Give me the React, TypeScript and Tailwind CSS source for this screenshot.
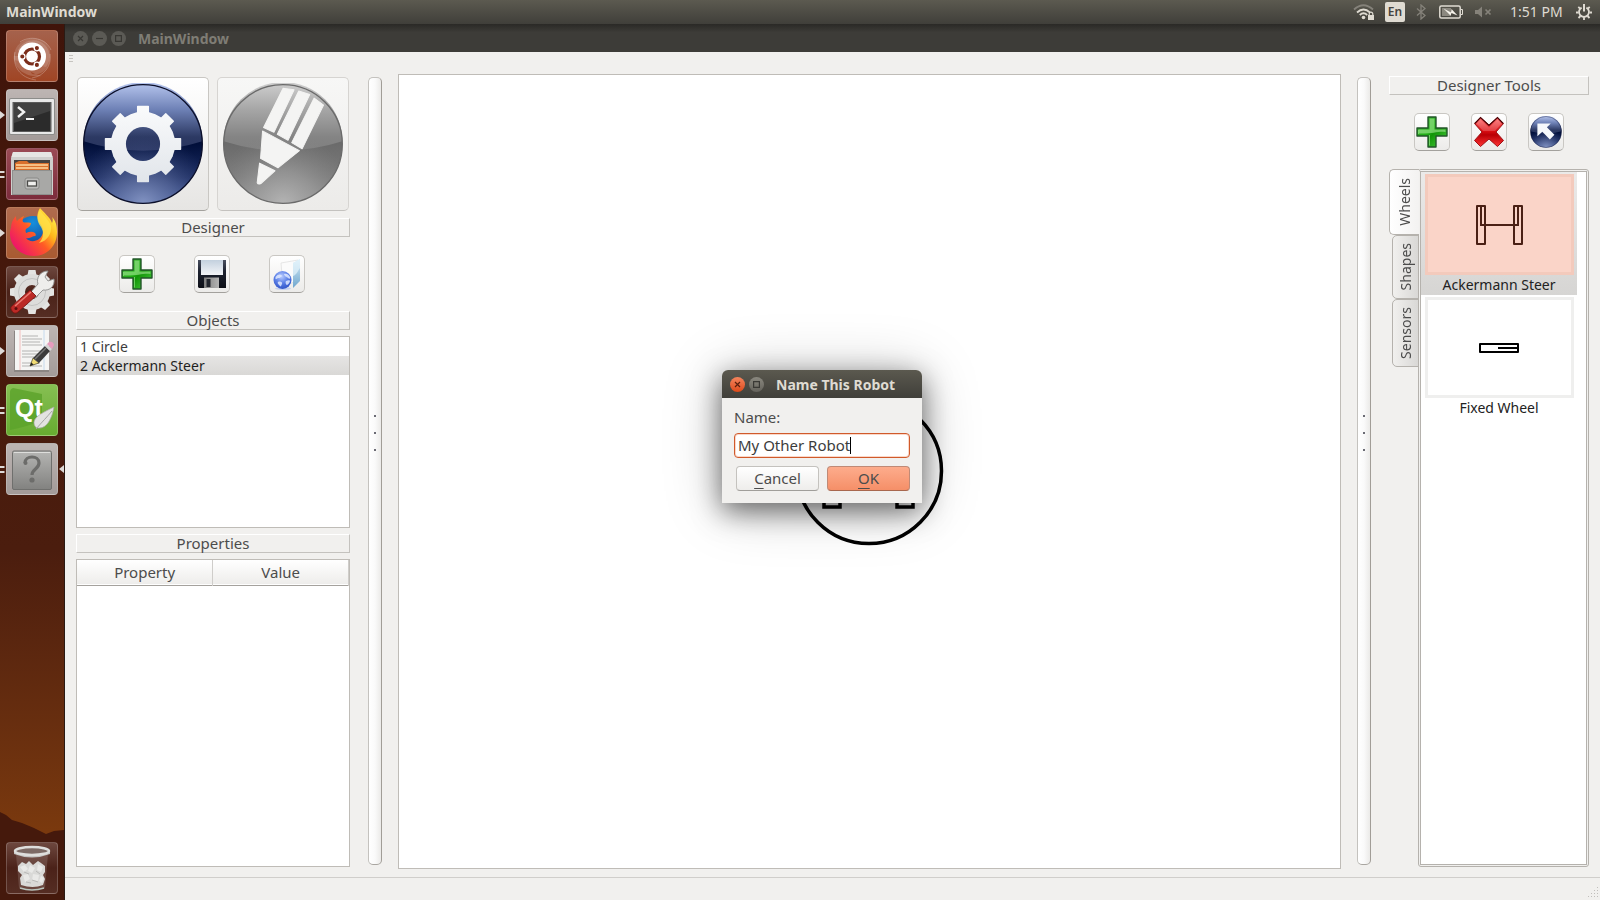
import { useState, type ReactNode } from "react";
import clsx from "clsx";

/* ---------- shared pieces ---------- */

function PanelLabel({ children }: { children: ReactNode }) {
  return (
    <h2 className="flex h-[19px] items-center justify-center border border-t-white border-l-white border-r-[#c4c2be] border-b-[#c4c2be] text-[15px] leading-none font-normal text-[#4c4c4c]">
      {children}
    </h2>
  );
}

function ToolButton({ label, children }: { label: string; children: ReactNode }) {
  return (
    <button
      type="button"
      aria-label={label}
      className="flex h-[38px] w-9 items-center justify-center rounded-[5px] border border-[#c9c7c3] border-b-[#a3a19d] bg-linear-to-b from-white to-[#ecebe9]"
    >
      {children}
    </button>
  );
}

function Splitter({ label }: { label: string }) {
  return (
    <div
      role="separator"
      aria-label={label}
      aria-orientation="vertical"
      className="mt-[3px] mb-1 flex w-[14px] shrink-0 flex-col items-center justify-center gap-[15px] rounded-[5px] border border-[#c4c2be] border-r-[#a19d97] border-b-[#a9a6a1] bg-linear-to-r from-white via-[#fafafa] to-[#ebeae8] pb-[76px]"
    >
      <span className="h-[2px] w-[2px] bg-[#6b6b74]" />
      <span className="h-[2px] w-[2px] bg-[#6b6b74]" />
      <span className="h-[2px] w-[2px] bg-[#6b6b74]" />
    </div>
  );
}

/* ---------- tool icons ---------- */

function PlusIcon() {
  return (
    <svg width="32" height="32" viewBox="0 0 32 32" aria-hidden="true">
      <defs>
        <linearGradient id="plusFill" x1="0" y1="0" x2="1" y2="1">
          <stop offset="0" stopColor="#3fae35" />
          <stop offset="0.45" stopColor="#1fae14" />
          <stop offset="0.55" stopColor="#129407" />
          <stop offset="1" stopColor="#4ed344" />
        </linearGradient>
      </defs>
      <path d="M12 1h8v11h11v8H20v11h-8V20H1v-8h11z" fill="url(#plusFill)" stroke="#23552a" strokeWidth="1.4" strokeLinejoin="round" />
      <path d="M13.5 2.5h5v11h11v2.5C22 15 17 18 2.500 17.500v-4h11z" fill="#b4f0a6" opacity="0.55" />
      <path d="M13.500 29.500V19M2.500 14v4" stroke="#8be47f" strokeWidth="1" opacity="0.7" />
    </svg>
  );
}

function FloppyIcon() {
  return (
    <svg width="30" height="30" viewBox="0 0 30 30" aria-hidden="true">
      <defs>
        <linearGradient id="diskBody" x1="0" y1="0" x2="0" y2="1">
          <stop offset="0" stopColor="#4a5060" />
          <stop offset="0.4" stopColor="#1d2230" />
          <stop offset="1" stopColor="#0d0f16" />
        </linearGradient>
        <linearGradient id="diskLabel" x1="0" y1="0" x2="0" y2="1">
          <stop offset="0" stopColor="#c3d0de" />
          <stop offset="1" stopColor="#f3f5f8" />
        </linearGradient>
        <linearGradient id="diskShutter" x1="0" y1="0" x2="1" y2="0">
          <stop offset="0" stopColor="#7f7f7f" />
          <stop offset="1" stopColor="#b4b4b4" />
        </linearGradient>
      </defs>
      <path d="M1 1h28v28H2l-1-1z" fill="url(#diskBody)" />
      <path d="M4 1h22v15H4z" fill="url(#diskLabel)" />
      <path d="M7 18.500h15V29H7z" fill="url(#diskShutter)" />
      <path d="M9.500 20h4v8h-4z" fill="#22252d" />
    </svg>
  );
}

function FolderGlobeIcon() {
  return (
    <svg width="32" height="34" viewBox="0 0 32 34" aria-hidden="true">
      <defs>
        <linearGradient id="folderSide" x1="0" y1="0" x2="0" y2="1">
          <stop offset="0" stopColor="#d8edf8" />
          <stop offset="1" stopColor="#6fa6cd" />
        </linearGradient>
        <radialGradient id="globe" cx="0.45" cy="0.3" r="0.75">
          <stop offset="0" stopColor="#b9ccff" />
          <stop offset="0.5" stopColor="#5b7fe6" />
          <stop offset="1" stopColor="#2b4fc4" />
        </radialGradient>
      </defs>
      <path d="M10 6l17-3v20L12 30z" fill="#fbfbfb" stroke="#dcdcdc" strokeWidth="0.700" />
      <path d="M22 6l7-4v22l-7 7z" fill="url(#folderSide)" />
      <path d="M22 6l7-4v9c-2 2-3 7-7 8z" fill="#e4f4fb" opacity="0.7" />
      <ellipse cx="12" cy="31.500" rx="8" ry="1.500" fill="#a9bdf2" opacity="0.6" />
      <circle cx="11.500" cy="23" r="9" fill="url(#globe)" />
      <path d="M4.500 20c2-3 5-3 6-2s-1 3-3 3-2 2-3 1zM13 17c3-1 5 1 6 3s-1 2-2 1-4-2-4-4zM7 25c2-1 5 0 4 2s-1 3-2 2-3-3-2-4zM15 24c2-1 4-1 4 0s-2 4-3 4-2-3-1-4z" fill="#dfe9ff" opacity="0.85" />
    </svg>
  );
}

function CrossIcon() {
  return (
    <svg width="32" height="32" viewBox="0 0 32 32" aria-hidden="true">
      <defs>
        <linearGradient id="crossFill" x1="0" y1="0" x2="0" y2="1">
          <stop offset="0" stopColor="#ff6d6d" />
          <stop offset="0.45" stopColor="#dd0f14" />
          <stop offset="0.6" stopColor="#b90006" />
          <stop offset="1" stopColor="#ff3434" />
        </linearGradient>
      </defs>
      <path d="M7.500 1.500L16 9l8.500-7.500 6 6L23 16l7.500 8.500-6 6L16 23l-8.500 7.500-6-6L9 16 1.500 7.500z" fill="url(#crossFill)" stroke="#a01216" strokeWidth="1" strokeLinejoin="round" />
      <path d="M1.800 7.500l5.700-6L16 9.500l8.500-8 5.700 6" fill="none" stroke="#4b0508" strokeWidth="1.200" />
      <path d="M7.500 3.500L16 11.500l8.500-8 4 4-6.500 7.500H10L3.500 7.500z" fill="#fff" opacity="0.200" />
    </svg>
  );
}

function CircleGradients({ id, tone }: { id: string; tone: "blue" | "grey" }) {
  const blue = tone === "blue";
  return (
    <defs>
      <linearGradient id={`${id}-top`} x1="0" y1="0" x2="0" y2="1">
        <stop offset="0" stopColor={blue ? "#b9c8f0" : "#cfcfcf"} />
        <stop offset="0.4" stopColor={blue ? "#6e81b6" : "#a6a6a6"} />
        <stop offset="0.8" stopColor={blue ? "#2c3963" : "#848484"} />
        <stop offset="1" stopColor={blue ? "#28345f" : "#808080"} />
      </linearGradient>
      <linearGradient id={`${id}-base`} x1="0" y1="0" x2="0" y2="1">
        <stop offset="0.500" stopColor={blue ? "#010f3a" : "#6b6b6b"} />
        <stop offset="0.78" stopColor={blue ? "#1c2d62" : "#7b7b7b"} />
        <stop offset="1" stopColor={blue ? "#4a62a3" : "#8f8f8f"} />
      </linearGradient>
      <radialGradient id={`${id}-glow`} cx="0.5" cy="1" r="0.6">
        <stop offset="0" stopColor={blue ? "#8c9cc8" : "#bababa"} stopOpacity="0.85" />
        <stop offset="0.45" stopColor={blue ? "#6474a4" : "#a2a2a2"} stopOpacity="0.6" />
        <stop offset="1" stopColor={blue ? "#35457a" : "#858585"} stopOpacity="0" />
      </radialGradient>
    </defs>
  );
}

function GlossyDisc({ id, tone }: { id: string; tone: "blue" | "grey" }) {
  return (
    <>
      <CircleGradients id={id} tone={tone} />
      <circle cx="180" cy="180" r="177" fill={`url(#${id}-base)`} />
      <path d="M3 172A177 177 0 0 1 357 172Q270 200 180 200Q90 200 3 172z" fill={`url(#${id}-top)`} />
      <circle cx="180" cy="180" r="177" fill={`url(#${id}-glow)`} />
      <circle cx="180" cy="180" r="177" fill="none" stroke={tone === "blue" ? "#0b0f2a" : "#6a6a6a"} strokeWidth="4" />
    </>
  );
}

const toothAngles = [0, 45, 90, 135, 180, 225, 270, 315];

function GearDisc() {
  return (
    <svg width="122" height="122" viewBox="-2 -2 364 364" aria-hidden="true">
      <GlossyDisc id="gearDisc" tone="blue" />
      <defs>
        <linearGradient id="gearFill" gradientUnits="userSpaceOnUse" x1="0" y1="66" x2="0" y2="294">
          <stop offset="0" stopColor="#fafbfc" />
          <stop offset="1" stopColor="#e1e5ea" />
        </linearGradient>
        <mask id="gearMask">
          <g fill="#fff">
            <circle cx="180" cy="180" r="96" />
            {toothAngles.map((angle) => (
              <path key={angle} d="M162 68q0-2 2-2h32q2 0 2 2v20l6 8h-48l6-8z" transform={`rotate(${angle} 180 180)`} />
            ))}
          </g>
          <circle cx="180" cy="180" r="51" fill="#000" />
        </mask>
      </defs>
      <rect x="60" y="60" width="240" height="240" fill="url(#gearFill)" mask="url(#gearMask)" />
    </svg>
  );
}

function PencilDisc() {
  return (
    <svg width="122" height="122" viewBox="-2 -2 364 364" aria-hidden="true">
      <GlossyDisc id="pencilDisc" tone="grey" />
      <g fill="#f4f4f3" stroke="#f4f4f3" strokeWidth="3" strokeLinejoin="round">
        <path d="M180 14l33 4-60 127-31-14z" />
        <path d="M227 22l33 10-65 137-32-18z" />
        <path d="M273 43l28 21-64 130-31-18z" />
        <path d="M119 141l110 59-64 51-52-28z" />
        <path d="M110 237l46 23-42 38q-8 4-11-2z" />
      </g>
    </svg>
  );
}

function ArrowDisc() {
  return (
    <svg width="32" height="32" viewBox="-2 -2 364 364" aria-hidden="true">
      <GlossyDisc id="arrowDisc" tone="blue" />
      <path d="M82 82h152l-44 44 86 86-52 52-86-86-56 50z" fill="#f6f8fb" />
    </svg>
  );
}

/* ---------- top panel ---------- */

function TopBar() {
  return (
    <header className="flex h-6 shrink-0 items-center justify-between bg-linear-to-b from-[#5c5a50] to-[#403f3a] pr-2 pl-[6px] text-[#dfdbd2]">
      <span className="text-[14px] leading-none font-bold">MainWindow</span>
      <div className="flex items-center">
        <svg width="22" height="18" viewBox="0 0 22 18" fill="none" aria-label="Wireless network" role="img">
          <path d="M1 6.500Q10.500-2 20 6.500" stroke="#85827a" strokeWidth="1.800" />
          <path d="M4 9.500Q10.500 3.500 17 9.500" stroke="#dfdbd2" strokeWidth="1.800" />
          <path d="M6.800 12Q10.500 8.500 14.200 12" stroke="#dfdbd2" strokeWidth="1.800" />
          <circle cx="10.500" cy="14.500" r="1.800" fill="#dfdbd2" />
          <path d="M15 12h6v5h-6z" fill="#dfdbd2" />
          <path d="M16.200 12.500v-1.500a1.800 1.800 0 0 1 3.600 0v1.500" stroke="#dfdbd2" strokeWidth="1.200" />
        </svg>
        <span className="ml-[10px] flex h-5 w-5 items-center justify-center rounded-[2px] bg-[#dfdbd2] text-[12px] leading-none font-semibold text-[#45433e]">
          En
        </span>
        <svg className="ml-[11px]" width="10" height="16" viewBox="0 0 10 16" fill="none" stroke="#85827a" strokeWidth="1.300" aria-label="Bluetooth" role="img">
          <path d="M1 4.500l8 7-4 3.500V1l4 3.500-8 7" />
        </svg>
        <svg className="ml-[13px]" width="24" height="14" viewBox="0 0 24 14" aria-label="Battery charging" role="img">
          <rect x="0.800" y="1" width="20.400" height="12" rx="1.500" fill="none" stroke="#dfdbd2" strokeWidth="1.500" />
          <path d="M22 4.500h1.500v5H22" fill="none" stroke="#dfdbd2" strokeWidth="1" />
          <rect x="3" y="3" width="9" height="8" fill="#8b887f" />
          <path d="M4.500 3.500l7.500 4 .5-3.500 6 6.500-6-2.500-1 2.500z" fill="#f5f2ea" />
        </svg>
        <svg className="ml-[11px]" width="18" height="14" viewBox="0 0 18 14" aria-label="Sound muted" role="img">
          <path d="M1 5h3l4-3.500v11L4 9H1z" fill="#85827a" />
          <path d="M11.500 4.500l5 5M16.500 4.500l-5 5" stroke="#85827a" strokeWidth="1.700" />
        </svg>
        <time className="ml-[18px] w-[53px] text-[14px] leading-none whitespace-nowrap">1:51 PM</time>
        <svg className="ml-[13px]" width="16" height="16" viewBox="0 0 16 16" fill="none" stroke="#dfdbd2" aria-label="System menu" role="img">
          <path d="M5.600 3.600a5 5 0 1 0 4.800 0" strokeWidth="1.800" />
          <path d="M8 0v7.500" strokeWidth="2" />
          <path d="M0 8.500h2.500M13.500 8.500H16M8 13.500V16M2.300 2.800l2 2M13.700 2.800l-2 2M2.500 14l2-2M13.500 14l-2-2" strokeWidth="1.800" />
        </svg>
      </div>
    </header>
  );
}

/* ---------- launcher ---------- */

type Pip = "none" | "arrow" | "bars";

function LauncherItem({ label, tile, pip = "none", focused = false, children }: { label: string; tile: string; pip?: Pip; focused?: boolean; children: ReactNode }) {
  return (
    <li className="flex h-[52px] items-center">
      <svg width="6" height="12" viewBox="0 0 6 12" fill="#dedad8" aria-hidden="true">
        {pip === "arrow" && <path d="M0 2l5 4-5 4z" />}
        {pip === "bars" && <path d="M0 3h4l1 1-1 1H0zM0 8h4l1 1-1 1H0z" />}
      </svg>
      <button type="button" aria-label={label} className={clsx("h-[52px] w-[52px] overflow-hidden rounded-[4px] border border-white/20", tile)}>
        <svg width="50" height="50" viewBox="1 1 50 50" aria-hidden="true">
          {children}
        </svg>
      </button>
      <svg width="6" height="12" viewBox="0 0 6 12" fill="#dedad8" aria-hidden="true">
        {focused && <path d="M6 2L1 6l5 4z" />}
      </svg>
    </li>
  );
}

const greyTile = "bg-linear-to-b from-[#bdb5b3] to-[#a39b99]";
const darkTile = "bg-linear-to-b from-[#6d473e] via-[#4b2219] to-[#552d23]";

function Launcher() {
  return (
    <nav aria-label="Launcher" className="relative flex w-[65px] shrink-0 flex-col justify-between border-r border-[#2a1a14] bg-linear-to-b from-[#40140a] from-0% via-[#4b1d0e] via-60% to-[#7a390e] to-92% pt-[6px] pb-[6px]">
      <svg className="absolute bottom-0 left-0" width="64" height="92" viewBox="0 0 64 92" aria-hidden="true">
        <path d="M0 4l6 3 6 5 10 3 12 5 12 6 8-3 10-1v70H0z" fill="#45190c" />
      </svg>
      <ul className="relative flex flex-col gap-[7px]">
        <LauncherItem label="Search your computer" tile="bg-linear-to-b from-[#a5624c] to-[#a04524]">
          <path d="M8 30C6 12 24 4 38 11c8 6 8 18 2 26" fill="#fff" opacity="0.130" />
          <path d="M12 20C20 4 44 8 44 28c0 10-8 18-18 16M8 26c0 16 16 22 28 20-10-2-20-8-20-20" fill="#fff" opacity="0.160" />
          <path d="M14 12C24 5 40 8 45 20M44 24c2 12-6 22-18 24M30 50C14 48 6 36 9 22" fill="none" stroke="#fff" strokeWidth="1" opacity="0.250" />
          <circle cx="26" cy="26.500" r="14" fill="#fff" />
          <circle cx="26" cy="26.500" r="7.500" fill="none" stroke="#7b2d1a" strokeWidth="3.200" />
          <g stroke="#fff" strokeWidth="1.300" fill="#7b2d1a">
            <circle cx="16.300" cy="26.500" r="2.700" />
            <circle cx="30.900" cy="18.100" r="2.700" />
            <circle cx="30.900" cy="34.900" r="2.700" />
          </g>
        </LauncherItem>
        <LauncherItem label="Terminal" tile={greyTile} pip="arrow">
          <rect x="3" y="9" width="46" height="37" rx="2" fill="#8c8c8a" />
          <rect x="4" y="10" width="44" height="35" rx="1" fill="#e8e8e8" />
          <rect x="6.500" y="13" width="39" height="30" fill="#5a5a5a" />
          <rect x="8" y="14" width="36" height="28" fill="#2b2b2b" />
          <path d="M8 14h36v8L8 34z" fill="#fff" opacity="0.100" />
          <path d="M12 18l6 5-6 5" fill="none" stroke="#f2f2f2" strokeWidth="2.400" />
          <path d="M20 30h8" stroke="#f2f2f2" strokeWidth="2" />
        </LauncherItem>
        <LauncherItem label="Files" tile="bg-linear-to-b from-[#9a4a55] to-[#7c2c3c]" pip="bars">
          <path d="M7 4h38l2 6v37H5V10z" fill="#cfcfcd" />
          <path d="M7 4h38l1.500 5h-41z" fill="#e6e6e4" />
          <rect x="8" y="12" width="36" height="11" fill="#474340" />
          <path d="M9 15l4-2h8l2 2h20v9H9z" fill="#d9702c" />
          <path d="M10 17h32M10 20h32" stroke="#ffd9a0" strokeWidth="1.500" />
          <rect x="6" y="22" width="40" height="25" fill="#8f8f8d" />
          <rect x="7" y="23" width="38" height="23" fill="#a8a8a6" />
          <rect x="19" y="30" width="14" height="11" rx="2" fill="#bdbdbb" stroke="#8a8a88" />
          <rect x="21.500" y="33" width="9" height="5" fill="#f0f0ee" stroke="#4a4a48" strokeWidth="1.300" />
        </LauncherItem>
        <LauncherItem label="Firefox" tile="bg-linear-to-b from-[#b06b4e] to-[#a95a31]" pip="arrow">
          <defs>
            <linearGradient id="foxBody" x1="0.9" y1="0.1" x2="0.1" y2="0.8">
              <stop offset="0" stopColor="#fff04a" />
              <stop offset="0.3" stopColor="#ffb71c" />
              <stop offset="0.55" stopColor="#ff5a25" />
              <stop offset="1" stopColor="#ee1668" />
            </linearGradient>
            <radialGradient id="foxGlobe" cx="0.5" cy="0.2" r="0.8">
              <stop offset="0" stopColor="#1590dd" />
              <stop offset="1" stopColor="#173a8b" />
            </radialGradient>
          </defs>
          <circle cx="27" cy="26" r="17" fill="url(#foxGlobe)" />
          <path d="M5 21c0-5 2-9 5-12 0 2 0 4 1 5 2-2 4-4 7-5-1 2-2 4-1 6 2 1 5 0 8 1 0 3-3 5-5 6-1 2 0 3 0 4 3-1 6-2 9 0 1 1 1 3 0 3-3 0-4 3-9 2 3 4 9 4 13 1 5-4 5-10 2-14-4-5-5-11-1-17 4 5 10 9 12 15 1-2 1-4 0-6 4 4 5 9 5 15 0 14-10 24-23 24C14 49 4 38 4 27c0-2 0-4 1-6z" fill="url(#foxBody)" />
          <path d="M34 3c-4 6-3 12 1 17 3 5 3 11-2 16 8-2 13-9 12-17-2-6-7-10-11-16z" fill="#ffe24a" opacity="0.800" />
        </LauncherItem>
        <LauncherItem label="System Settings" tile={darkTile}>
          <g fill="#e4e4e2">
            {toothAngles.map((angle) => (
              <path key={angle} d="M21 12l1.500-8h7l1.500 8z" transform={`rotate(${angle} 26 26)`} />
            ))}
          </g>
          <circle cx="26" cy="26" r="12.500" fill="none" stroke="#dddddb" strokeWidth="11" />
          <circle cx="26" cy="26" r="13.500" fill="none" stroke="#bdbdbb" strokeWidth="0.800" />
          <path d="M24 27l8-9c-2-6 2-13 10-13l-3 6 3 4 6-2c1 7-4 12-11 11l-8 8z" fill="#eeeeec" stroke="#8f8f8d" strokeWidth="0.900" />
          <path d="M6 40l18-16 6 6-18 16c-2 2-5 1-6-1s-2-3 0-5z" fill="#bb2a26" stroke="#7d1512" strokeWidth="0.900" />
          <path d="M9 40l16-14" stroke="#ea7a70" strokeWidth="1.600" />
          <circle cx="10" cy="42.500" r="1.500" fill="#5c0f0d" />
        </LauncherItem>
        <LauncherItem label="Text Editor" tile={greyTile} pip="arrow">
          <path d="M8 6h35v41H8z" fill="#8b8583" />
          <path d="M9 5h34v40H9z" fill="#f5f5f4" />
          <path d="M14 5v40" stroke="#f3b0b0" strokeWidth="0.800" />
          <path d="M38 5v40" stroke="#b9d3ee" strokeWidth="0.800" />
          <path d="M16 11h16M16 14h20M16 17h18M16 20h20M16 26h20M16 29h18M16 32h12M16 38h18M16 41h20" stroke="#b4b4b2" strokeWidth="1.200" />
          <path d="M24 41l3-8 6 5z" fill="#f1dc74" stroke="#4c4526" strokeWidth="0.700" />
          <path d="M24 41l1.200-3.500 2.500 2z" fill="#222" />
          <path d="M27 33l12-12 5 5-11 12z" fill="#3b3b3b" />
          <path d="M29 34l11-11" stroke="#777" strokeWidth="1.500" />
          <path d="M39 21l2-2 5 5-2 2z" fill="#d5d5d5" />
          <path d="M41 19l2-2q4-1 5 3l-2 4z" fill="#e79bbd" />
        </LauncherItem>
        <LauncherItem label="Qt Creator" tile="bg-linear-to-b from-[#86bf52] to-[#67ab30]" pip="bars">
          <path d="M4 8q0-3 3-4l29 6v26q-12 6-32 10z" fill="#5ba22a" opacity="0.800" />
          <text x="9" y="33" fontFamily="'Liberation Sans Narrow', 'Liberation Sans', sans-serif" fontSize="25" fontWeight="700" fill="#fff" textAnchor="start">Qt</text>
          <path d="M48 23c-10 5-19 9-20 15 0 4 2 6 4 6 9 1 14-10 16-21z" fill="#e3e3e1" stroke="#a9a9a7" strokeWidth="0.700" />
          <path d="M46 27c-5 6-10 11-16 18" fill="none" stroke="#a5a5a3" strokeWidth="1" />
        </LauncherItem>
        <LauncherItem label="Unknown application" tile={greyTile} pip="bars" focused>
          <defs>
            <linearGradient id="unknownFill" x1="0" y1="0" x2="0" y2="1">
              <stop offset="0" stopColor="#b5b5b3" />
              <stop offset="1" stopColor="#828280" />
            </linearGradient>
          </defs>
          <rect x="6.500" y="8" width="39" height="38.500" rx="1.500" fill="url(#unknownFill)" stroke="#6f6f6d" />
          <path d="M8 9.500h36" stroke="#dededc" strokeWidth="1" />
          <path d="M19 20c0-8 14-8 14 0 0 6-7 6-7 12" fill="none" stroke="#6c6c6a" strokeWidth="3.200" />
          <circle cx="19.500" cy="20" r="2" fill="#6c6c6a" />
          <circle cx="26" cy="37" r="2.600" fill="#6c6c6a" />
        </LauncherItem>
      </ul>
      <ul className="relative">
        <LauncherItem label="Trash" tile={darkTile}>
          <path d="M10 12l3 34q13 4 26 0l3-34z" fill="#fff" opacity="0.140" />
          <path d="M12 24l4-4 4 2 3-3 4 4 5-4 3 2 4 3v6l-2 3 2 4-2 6q-10 4-22 0l-1-7 2-3-4-4z" fill="#d9d9d7" />
          <path d="M14 25l5-2 3 4-4 3zM24 23l5 3-3 5-4-2zM32 22l5 3-2 5-4-2zM17 33l5-1 2 5-5 3zM27 32l6 1-1 6-6-1zM35 34l3 2-2 5-3-2z" fill="#e9e9e7" />
          <path d="M18 30l5 2M26 38l6 2M30 29l4 3M20 40l5 1" stroke="#b9b9b7" strokeWidth="1" />
          <path d="M8 9v3q18 7 36 0V9q-18 7-36 0z" fill="#c2c2c0" />
          <ellipse cx="26" cy="9" rx="17" ry="4" fill="#7c6a65" stroke="#dededc" strokeWidth="2.500" />
          <path d="M14 46q12 4 24 0" fill="none" stroke="#b9c4bd" strokeWidth="1.500" />
        </LauncherItem>
      </ul>
    </nav>
  );
}

/* ---------- main window ---------- */

function WindowTitle() {
  const dot = "flex h-[15px] w-[15px] items-center justify-center rounded-full bg-[#5b5a55]";
  return (
    <div className="flex h-7 shrink-0 items-center gap-1 bg-linear-to-b from-[#2a2926] from-0% via-[#3d3c38] via-30% to-[#3d3c38] pl-2">
      <button type="button" aria-label="Close" className={dot}>
        <svg width="7" height="7" viewBox="0 0 7 7" stroke="#383733" strokeWidth="1.200" aria-hidden="true"><path d="M1 1l5 5M6 1L1 6" /></svg>
      </button>
      <button type="button" aria-label="Minimize" className={dot}>
        <svg width="7" height="7" viewBox="0 0 7 7" stroke="#383733" strokeWidth="1.200" aria-hidden="true"><path d="M0 3.500h7" /></svg>
      </button>
      <button type="button" aria-label="Maximize" className={dot}>
        <svg width="7" height="7" viewBox="0 0 7 7" fill="none" stroke="#383733" strokeWidth="1.200" aria-hidden="true"><path d="M.6.6h5.800v5.800H.6z" /></svg>
      </button>
      <h1 className="pt-px pl-2 text-[14px] leading-none font-bold text-[#7f7d75]">MainWindow</h1>
    </div>
  );
}

const objects = ["1 Circle", "2 Ackermann Steer"];

function LeftPanel() {
  const [selected, setSelected] = useState(objects[1]);
  return (
    <section aria-label="Designer" className="mt-[3px] mb-[2px] flex w-[274px] shrink-0 flex-col">
      <div className="flex justify-between px-px">
        <button type="button" aria-label="Settings" className="flex h-[134px] w-[132px] items-center justify-center rounded-[5px] border border-[#c9c7c3] border-b-[#a3a19d] bg-linear-to-b from-white to-[#e6e5e3]">
          <GearDisc />
        </button>
        <button type="button" aria-label="Edit" className="flex h-[134px] w-[132px] items-center justify-center rounded-[5px] border border-[#d6d4d1] border-b-[#c4c2bf] bg-linear-to-b from-[#f7f7f6] to-[#ecebe9]">
          <PencilDisc />
        </button>
      </div>
      <div className="mt-[7px]">
        <PanelLabel>Designer</PanelLabel>
      </div>
      <div className="mt-[18px] flex justify-center gap-[39px] pr-[2px]">
        <ToolButton label="Add robot"><PlusIcon /></ToolButton>
        <ToolButton label="Save robot"><FloppyIcon /></ToolButton>
        <ToolButton label="Open robot"><FolderGlobeIcon /></ToolButton>
      </div>
      <div className="mt-[18px]">
        <PanelLabel>Objects</PanelLabel>
      </div>
      <ul className="mt-[6px] h-[192px] border border-[#bfbcb7] bg-white text-[14px] text-[#3c3c3c]">
        {objects.map((name) => (
          <li key={name}>
            <button
              type="button"
              aria-pressed={selected === name}
              onClick={() => setSelected(name)}
              className={clsx(
                "flex h-[19px] w-full items-center px-[3px] leading-none",
                selected === name && "bg-linear-to-b from-[#e6e5e4] to-[#d9d8d6] text-[#1f1f1f]",
              )}
            >
              {name}
            </button>
          </li>
        ))}
      </ul>
      <div className="mt-[6px]">
        <PanelLabel>Properties</PanelLabel>
      </div>
      <div className="mt-[6px] flex-1 border border-[#bfbcb7] bg-white">
        <table className="w-full table-fixed border-collapse text-[15px] text-[#4c4c4c]">
          <thead>
            <tr className="h-[25px] border-b border-[#a5a29d] bg-linear-to-b from-white to-[#eeedeb]">
              <th scope="col" className="border-r border-[#cfcdca] p-0 leading-none font-normal">Property</th>
              <th scope="col" className="border-r border-[#cfcdca] p-0 leading-none font-normal">Value</th>
            </tr>
          </thead>
        </table>
      </div>
    </section>
  );
}

function Canvas() {
  return (
    <main className="flex min-w-0 flex-1 items-center justify-center border border-[#bfbcb7] bg-white">
      <svg width="150" height="150" viewBox="-74 -74 150 150" fill="none" stroke="#000" aria-label="Robot drawing" role="img">
        <circle r="72.5" strokeWidth="3.500" />
        <path d="M-45-37h16v73h-16zM28-37h16v73H28z" strokeWidth="3.500" />
        <path d="M-37-37V0h74v-37" strokeWidth="3.500" />
      </svg>
    </main>
  );
}

const tabs = [
  { name: "Wheels", size: "h-[66px]" },
  { name: "Shapes", size: "h-[64px]" },
  { name: "Sensors", size: "h-[68px]" },
];

function ToolThumb({ name, selected, onSelect, children }: { name: string; selected: boolean; onSelect: () => void; children: ReactNode }) {
  return (
    <li>
      <button
        type="button"
        aria-pressed={selected}
        onClick={onSelect}
        className={clsx("flex h-[123px] w-[156px] flex-col items-center pt-[2px]", selected && "bg-linear-to-b from-[#ebeae9] to-[#d6d5d3]")}
      >
        <span className={clsx("flex h-[101px] w-[149px] items-center justify-center border-3", selected ? "border-[#f3cabc] bg-[#fad4c8]" : "border-[#efefee] bg-white")}>
          {children}
        </span>
        <span className="flex h-5 items-center text-[14px] leading-none text-[#222]">{name}</span>
      </button>
    </li>
  );
}

function RightPanel() {
  const [tab, setTab] = useState("Wheels");
  const [part, setPart] = useState("Ackermann Steer");
  return (
    <section aria-label="Designer tools" className="mt-[2px] mb-[2px] flex w-[200px] shrink-0 flex-col">
      <PanelLabel>Designer Tools</PanelLabel>
      <div className="mt-[18px] flex justify-center gap-[21px]">
        <ToolButton label="Add"><PlusIcon /></ToolButton>
        <ToolButton label="Delete"><CrossIcon /></ToolButton>
        <ToolButton label="Select"><ArrowDisc /></ToolButton>
      </div>
      <div className="mt-[18px] flex min-h-0 flex-1">
        <div role="tablist" aria-orientation="vertical" className="z-10 -mr-px flex w-[30px] flex-col items-end">
          {tabs.map(({ name, size }) => (
            <button
              key={name}
              type="button"
              role="tab"
              aria-selected={tab === name}
              onClick={() => setTab(name)}
              className={clsx(
                "flex items-center justify-center rounded-l-[5px] border border-[#b5b2ad] text-[14px] leading-none text-[#4c4c4c]",
                size,
                tab === name ? "w-[30px] border-r-0 bg-linear-to-r from-white to-[#f3f2f1]" : "w-[27px] bg-linear-to-r from-[#f1f0ee] to-[#d9d8d6]",
              )}
            >
              <span className="rotate-180 [writing-mode:vertical-rl]">{name}</span>
            </button>
          ))}
        </div>
        <div role="tabpanel" className="flex flex-1 rounded-[3px] border border-[#b5b2ad] bg-[#f1f0ee] p-px">
          <ul className="flex-1 border border-[#b5b2ad] bg-white">
            <ToolThumb name="Ackermann Steer" selected={part === "Ackermann Steer"} onSelect={() => setPart("Ackermann Steer")}>
              <svg width="48" height="40" viewBox="0 0 48 40" fill="none" stroke="#4a2015" strokeWidth="2" aria-hidden="true">
                <path d="M2 1h8v38H2zM39 1h8v38h-8z" strokeLinejoin="round" />
                <path d="M6 1v19h37V1" />
              </svg>
            </ToolThumb>
            <ToolThumb name="Fixed Wheel" selected={part === "Fixed Wheel"} onSelect={() => setPart("Fixed Wheel")}>
              <svg width="40" height="10" viewBox="0 0 40 10" fill="none" stroke="#000" strokeWidth="2" aria-hidden="true">
                <path d="M1 1h38v8H1zM19 5h20" strokeLinejoin="round" />
              </svg>
            </ToolThumb>
          </ul>
        </div>
      </div>
    </section>
  );
}

/* ---------- dialog ---------- */

function NameDialog() {
  const [name, setName] = useState("My Other Robot");
  return (
    <form
      role="dialog"
      aria-labelledby="dialog-title"
      onSubmit={(event) => event.preventDefault()}
      className="absolute top-[370px] left-[722px] z-20 w-[200px] rounded-t-[6px] bg-[#f1f0ee] shadow-[0_8px_28px_rgba(0,0,0,0.55),0_4px_60px_rgba(0,0,0,0.22)]"
    >
      <div className="flex h-7 items-center gap-1 rounded-t-[6px] bg-linear-to-b from-[#5b594f] to-[#403f3a] pl-2">
        <button type="button" aria-label="Close dialog" className="flex h-[15px] w-[15px] items-center justify-center rounded-full bg-linear-to-b from-[#f4845c] to-[#dd4814]">
          <svg width="7" height="7" viewBox="0 0 7 7" stroke="#5c1f0c" strokeWidth="1.200" aria-hidden="true"><path d="M1 1l5 5M6 1L1 6" /></svg>
        </button>
        <button type="button" aria-label="Maximize dialog" className="flex h-[15px] w-[15px] items-center justify-center rounded-full bg-linear-to-b from-[#8a887f] to-[#65635c]">
          <svg width="7" height="7" viewBox="0 0 7 7" fill="none" stroke="#3a3935" strokeWidth="1.200" aria-hidden="true"><path d="M.6.6h5.800v5.800H.6z" /></svg>
        </button>
        <h2 id="dialog-title" className="pt-px pl-2 text-[14px] leading-none font-bold whitespace-nowrap text-[#dfdbd2]">Name This Robot</h2>
      </div>
      <div className="px-3 pt-[9px] pb-3">
        <label htmlFor="robot-name" className="block h-5 text-[15px] leading-5 text-[#4c4c4c]">Name:</label>
        <div className="mt-[6px] flex h-[25px] items-center rounded-[4px] border border-[#d05a2b] bg-white px-[3px] pb-px ring-1 ring-[#fbd7c8] ring-inset">
          <input
            id="robot-name"
            value={name}
            size={12}
            onChange={(event) => setName(event.target.value)}
            className="[field-sizing:content] max-w-full bg-transparent text-[15px] leading-none text-[#3c3c3c] outline-none"
          />
          <span aria-hidden="true" className="h-[17px] w-px bg-black" />
        </div>
        <div className="mt-2 flex gap-2 pl-[2px]">
          <button type="button" className="h-[25px] flex-1 rounded-[4px] border border-[#c4c2be] border-b-[#a09e9a] bg-linear-to-b from-white to-[#eeedeb] text-[15px] leading-none text-[#4c4c4c]">
            <span className="underline underline-offset-4">C</span>ancel
          </button>
          <button type="submit" className="h-[25px] flex-1 rounded-[4px] border border-[#c08a76] border-b-[#a8674e] bg-linear-to-b from-[#fdac8c] to-[#f58f68] text-[15px] leading-none text-[#4c4c4c]">
            <span className="underline underline-offset-4">O</span>K
          </button>
        </div>
      </div>
    </form>
  );
}

export default function App() {
  return (
    <div className="relative flex min-h-screen flex-col bg-[#f1f0ee] font-['Noto_Sans','Open_Sans',sans-serif]">
      <TopBar />
      <div className="flex flex-1">
        <Launcher />
        <div className="flex min-w-0 flex-1 flex-col">
          <WindowTitle />
          <div className="flex h-[22px] shrink-0 items-start pt-[3px] pl-1">
            <svg width="4" height="8" viewBox="0 0 4 8" fill="#c6c4c0" aria-hidden="true"><path d="M0 0h4v1H0zM0 3h4v1H0zM0 6h4v1H0z" /></svg>
          </div>
          <div className="flex flex-1 px-[11px]">
            <LeftPanel />
            <div className="ml-[18px] flex"><Splitter label="Resize left panel" /></div>
            <div className="mx-4 flex min-w-0 flex-1"><Canvas /></div>
            <div className="mr-[18px] flex"><Splitter label="Resize right panel" /></div>
            <RightPanel />
          </div>
          <footer className="mt-2 flex h-[23px] shrink-0 items-end justify-end border-t border-[#d0cecb] p-[2px]">
            <svg width="10" height="11" viewBox="0 0 10 11" fill="#c0bebb" aria-hidden="true">
              <path d="M0 9h1v1H0zM3 9h1v1H3zM6 9h1v1H6zM9 9h1v1H9zM3 6h1v1H3zM6 6h1v1H6zM9 6h1v1H9zM6 3h1v1H6zM9 3h1v1H9zM9 0h1v1H9z" />
            </svg>
          </footer>
        </div>
      </div>
      <NameDialog />
    </div>
  );
}
